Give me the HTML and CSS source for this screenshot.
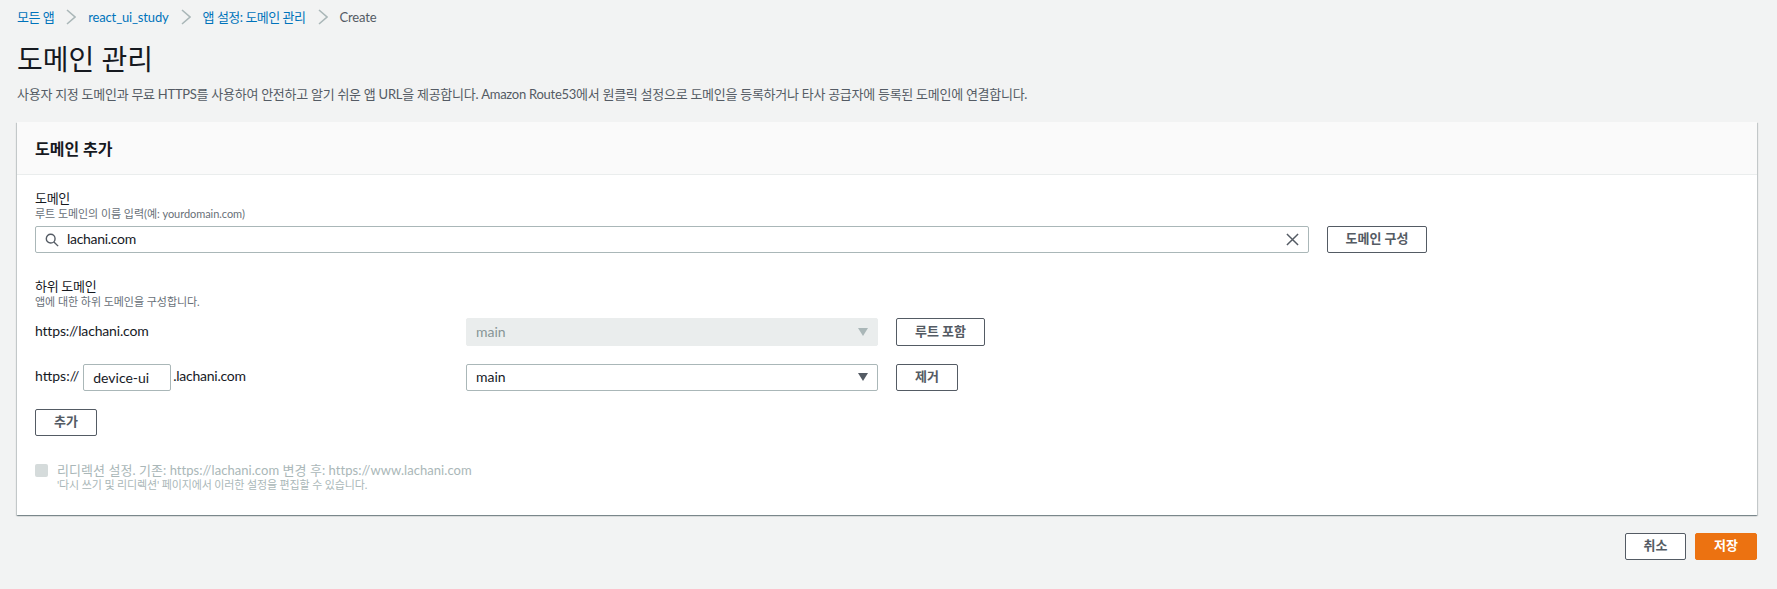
FILE: index.html
```html
<!DOCTYPE html>
<html lang="ko">
<head>
<meta charset="utf-8">
<title>도메인 관리</title>
<link rel="stylesheet" href="styles.css">
</head>
<body>
<nav class="crumbs">
  <a class="crumb crumb-tight">모든 앱</a>
  <svg class="sep" viewBox="0 0 10 16"><path d="M1 1 9 8 1 15"/></svg>
  <a class="crumb">react_ui_study</a>
  <svg class="sep" viewBox="0 0 10 16"><path d="M1 1 9 8 1 15"/></svg>
  <a class="crumb crumb-tight">앱 설정: 도메인 관리</a>
  <svg class="sep" viewBox="0 0 10 16"><path d="M1 1 9 8 1 15"/></svg>
  <span class="crumb-current">Create</span>
</nav>
<h1 class="title">도메인 관리</h1>
<p class="desc">사용자 지정 도메인과 무료 HTTPS를 사용하여 안전하고 알기 쉬운 앱 URL을 제공합니다. Amazon Route53에서 원클릭 설정으로 도메인을 등록하거나 타사 공급자에 등록된 도메인에 연결합니다.</p>

<section class="card">
  <header class="card-head"><h2>도메인 추가</h2></header>
  <div class="card-body">
    <div class="label">도메인</div>
    <div class="hint">루트 도메인의 이름 입력(예: yourdomain.com)</div>
    <div class="domain-row">
      <div class="search">
        <svg class="search-icon" viewBox="0 0 16 16"><circle cx="6.5" cy="6.5" r="5"/><path d="M10.2 10.2 15 15"/></svg>
        <span class="search-text">lachani.com</span>
        <svg class="clear-icon" viewBox="0 0 14 14"><path d="M1 1 13 13M13 1 1 13"/></svg>
      </div>
      <button class="btn btn-config">도메인 구성</button>
    </div>

    <div class="label sub-label">하위 도메인</div>
    <div class="hint">앱에 대한 하위 도메인을 구성합니다.</div>

    <div class="sub-row first">
      <div class="url url-root">https://lachani.com</div>
      <div class="select disabled"><span>main</span><i class="caret"></i></div>
      <button class="btn btn-root">루트 포함</button>
    </div>
    <div class="sub-row second">
      <div class="url">https://<span class="prefix">device-ui</span><span class="suffix">.lachani.com</span></div>
      <div class="select"><span>main</span><i class="caret"></i></div>
      <button class="btn btn-remove">제거</button>
    </div>

    <button class="btn btn-add">추가</button>

    <div class="redirect">
      <span class="check"></span>
      <div>
        <div class="redirect-text">리디렉션 설정. 기존: https://lachani.com 변경 후: https://www.lachani.com</div>
        <div class="redirect-hint">'다시 쓰기 및 리디렉션' 페이지에서 이러한 설정을 편집할 수 있습니다.</div>
      </div>
    </div>
  </div>
</section>

<footer class="actions">
  <button class="btn btn-foot">취소</button>
  <button class="btn btn-foot primary">저장</button>
</footer>
</body>
</html>
```
FILE: styles.css
```css
* { box-sizing: border-box; }
html, body { height: 100%; }
body {
  margin: 0;
  padding: 0 20px 0 17px;
  background: #f2f3f3;
  color: #16191f;
  font-family: "Lato", "Noto Sans CJK KR", sans-serif;
  font-size: 13px;
  line-height: 20px;
  overflow: hidden;
}
.crumbs { display: flex; align-items: center; height: 20px; margin-top: 7px; letter-spacing: -0.15px; }
.crumb { color: #0073bb; }
.crumb-tight { letter-spacing: -0.5px; }
.crumb-current { color: #545b64; }
.sep { width: 10px; height: 16px; margin: 0 12px; fill: none; stroke: #aab7b8; stroke-width: 1.6; }
.title { margin: 14px 0 0; font-size: 28px; line-height: 36px; font-weight: 400; }
.desc { margin: 7px 0 0; color: #545b64; line-height: 20px; letter-spacing: -0.27px; }
.card {
  margin-top: 18px;
  height: 393px;
  background: #fff;
  box-shadow: 0 1px 1px 0 rgba(0,28,36,.3), 1px 1px 1px 0 rgba(0,28,36,.15), -1px 1px 1px 0 rgba(0,28,36,.15);
}
.card-head { height: 53px; background: #fafafa; border-bottom: 1px solid #eaeded; padding: 17px 18px 0; }
.card-head h2 { margin: 0; font-size: 16px; line-height: 20px; font-weight: 700; }
.card-body { padding: 14px 18px 0; }
.label { line-height: 18px; letter-spacing: -0.3px; }
.hint { font-size: 11px; line-height: 14px; color: #687078; letter-spacing: -0.05px; }
.domain-row { display: flex; margin-top: 5px; gap: 18px; }
.search {
  display: flex; align-items: center;
  width: 1274px; height: 27px;
  padding: 0 9px;
  border: 1px solid #aab7b8; border-radius: 2px;
  background: #fff;
}
.search-icon { width: 14px; height: 14px; fill: none; stroke: #545b64; stroke-width: 1.6; }
.search-text { margin-left: 8px; flex: 1; font-size: 14px; letter-spacing: -0.3px; padding-bottom: 1px; }
.clear-icon { width: 13px; height: 13px; fill: none; stroke: #545b64; stroke-width: 1.6; }
.btn {
  display: block;
  height: 27px; padding: 0 0 3px;
  border: 1px solid #545b64; border-radius: 2px;
  background: #fff; color: #545b64;
  font: 700 13px/20px "Lato", "Noto Sans CJK KR", sans-serif;
}
.btn-config { width: 100px; }
.sub-label { margin-top: 24px; }
.sub-row { display: flex; align-items: center; }
.sub-row.first { margin-top: 9px; height: 28px; }
.sub-row.second { margin-top: 18px; height: 27px; }
.url { width: 431px; flex: none; font-size: 14px; }
.url-root { letter-spacing: -0.18px; padding-bottom: 2px; }
.suffix { letter-spacing: -0.25px; }
.prefix {
  display: inline-block; width: 88px; height: 27px;
  margin: 0 2px 0 4px; padding: 0 9px;
  border: 1px solid #aab7b8; border-radius: 2px;
  line-height: 25px; vertical-align: middle;
}
.select {
  display: flex; align-items: center; justify-content: space-between;
  width: 412px; height: 27px; padding: 0 9px 1px;
  border: 1px solid #aab7b8; border-radius: 2px;
  font-size: 14px;
}
.select.disabled { height: 28px; background: #eaeded; border-color: #eaeded; color: #879596; }
.caret { width: 0; height: 0; border: 5px solid transparent; border-top: 8px solid #545b64; border-bottom: 0; }
.disabled .caret { border-top-color: #aab7b8; }
.sub-row .btn { margin-left: 18px; }
.btn-root { width: 89px; height: 28px; }
.btn-remove { width: 62px; }
.btn-add { width: 62px; margin-top: 18px; }
.redirect { display: flex; gap: 9px; margin-top: 26px; }
.check { width: 13px; height: 13px; margin-top: 2px; flex: none; background: #d5dbdb; border-radius: 2px; }
.redirect-text { color: #aab7b8; line-height: 16px; letter-spacing: 0.05px; }
.redirect-hint { color: #aab7b8; font-size: 11px; line-height: 14px; letter-spacing: -0.14px; }
.actions { display: flex; justify-content: flex-end; gap: 9px; margin-top: 18px; }
.btn-foot { width: 62px; }
.btn-foot:first-child { width: 61px; }
.primary { background: #ec7211; border-color: #ec7211; color: #fff; }
```
